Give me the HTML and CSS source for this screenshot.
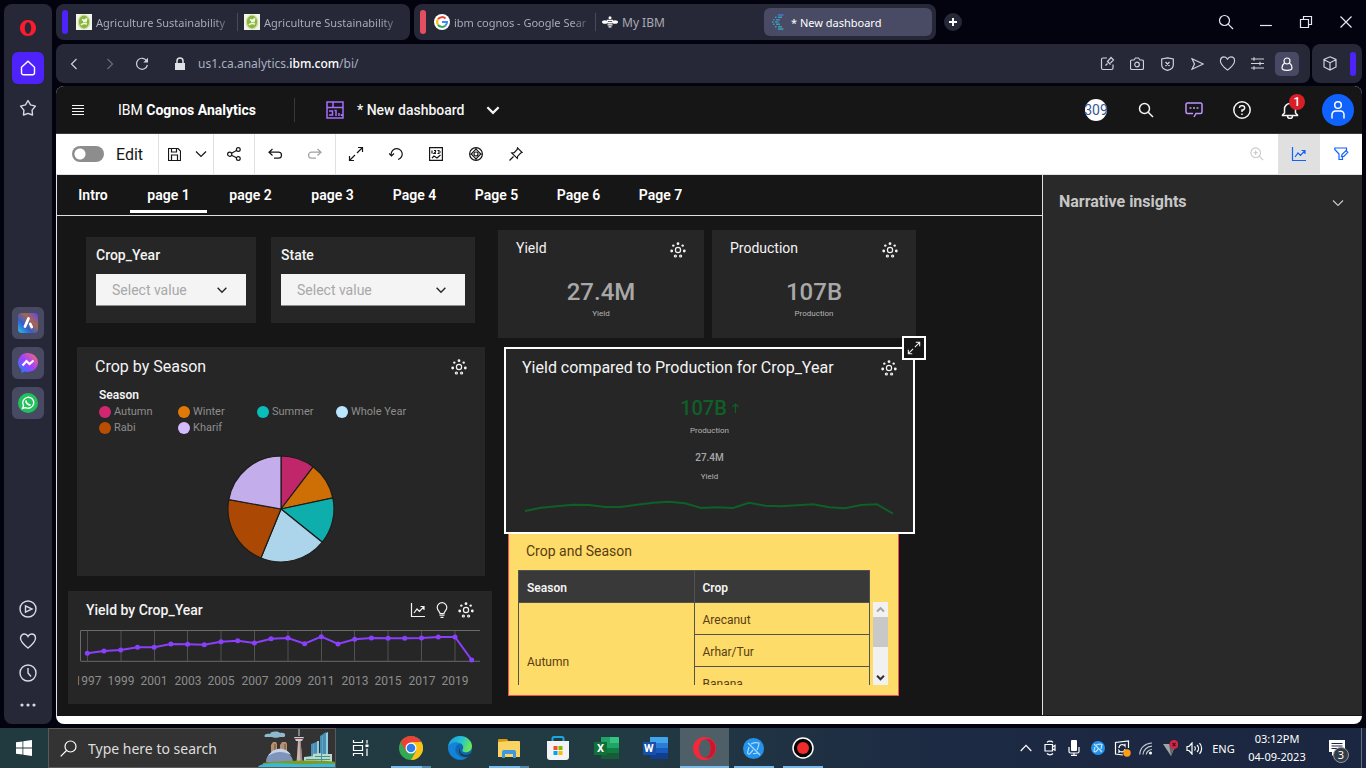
FILE: index.html
```html
<!DOCTYPE html>
<html lang="en">
<head>
<meta charset="utf-8">
<title>* New dashboard</title>
<link rel="stylesheet" href="styles.css">
</head>
<body>
<svg class="sprite" aria-hidden="true">
  <symbol id="chev-down" viewBox="0 0 16 16"><path d="M3 5.500l5 5 5-5"/></symbol>
  <symbol id="dots-gear" viewBox="0 0 16 16"><circle cx="8" cy="8" r="2.600"/><g fill="currentColor" stroke="none"><circle cx="8" cy="1.700" r="1.400"/><circle cx="3.300" cy="3.600" r="1.200"/><circle cx="12.700" cy="3.600" r="1.200"/><circle cx="1.700" cy="9" r="1.400"/><circle cx="14.300" cy="9" r="1.400"/></g><circle cx="5.400" cy="14" r="1"/><circle cx="10.600" cy="14" r="1"/></symbol>
  <symbol id="expand" viewBox="0 0 16 16"><path d="M10 1.500h4.500V6M14.500 1.500L9 7M6 14.500H1.500V10M1.500 14.500L7 9"/></symbol>
  <symbol id="magnify" viewBox="0 0 16 16"><circle cx="6.500" cy="6.500" r="5"/><path d="M10.200 10.200L15 15"/></symbol>
  <symbol id="trend" viewBox="0 0 16 16"><path d="M1.500 1v13.500H15M4 11l3-4 2.500 2.500 4.500-5M10.500 4.500H14V8"/></symbol>
  <symbol id="heart" viewBox="0 0 18 18"><path d="M9 16C4.500 12.500 1.500 9.800 1.500 6.300 1.500 3.700 3.300 2 5.400 2 7 2 8.200 2.900 9 4.400 9.800 2.900 11 2 12.600 2c2.100 0 3.900 1.700 3.900 4.300C16.500 9.800 13.500 12.500 9 16z"/></symbol>
  <symbol id="leaf" viewBox="0 0 16 16"><path fill="#f4f4ea" stroke="none" d="M0 0h16v16H0z"/><ellipse cx="8" cy="8" rx="5.800" ry="7" fill="#8bb646" stroke="#d3e3a7"/><path d="M6 5.500l2 1 2.500-1.500-.5 2.500H7M5 11c2-2.500 4.500-1.500 6-1" stroke="#f4f9df" stroke-width="1.500"/></symbol>
</svg>

<div class="desktop">
  <div class="browser">
    <nav class="sidebar" aria-label="Browser sidebar">
      <button class="side-btn" aria-label="Opera menu"><svg width="16" height="18" viewBox="0 0 16 18"><path fill="#ff1b2d" fill-rule="evenodd" stroke="none" d="M8 1c4.500 0 8 3.500 8 8s-3.500 8-8 8-8-3.500-8-8 3.500-8 8-8zm0 2.200C6 3.200 4.800 6 4.800 9S6 14.800 8 14.800 11.200 12 11.200 9 10 3.200 8 3.200z"/></svg></button>
      <button class="side-btn home" aria-label="Home"><svg width="16" height="16" viewBox="0 0 16 16"><path d="M1.500 7.200L8 1.200l6.500 6v5.600a2 2 0 0 1-2 2h-9a2 2 0 0 1-2-2z"/></svg></button>
      <button class="side-btn" aria-label="Bookmarks"><svg width="18" height="18" viewBox="0 0 18 18"><path stroke-linejoin="round" d="M9 1.500l2.500 4.400 4.900 1.200-3.300 4 .4 4.900L9 14.400 4.500 16l.4-4.900-3.300-4 4.900-1.200z"/></svg></button>
      <div class="side-space"></div>
      <button class="side-btn app" aria-label="Aria"><svg width="20" height="20" viewBox="0 0 20 20"><defs><linearGradient id="ga" x1="0" y1="1" x2="1" y2="0"><stop offset="0" stop-color="#29c4ec"/><stop offset=".35" stop-color="#315fce"/><stop offset=".65" stop-color="#a6654e"/><stop offset="1" stop-color="#5e41ff"/></linearGradient></defs><rect width="20" height="20" rx="4" fill="url(#ga)" stroke="none"/><path d="M10.500 5.500L7 13.500M12.300 11l1.400 3" stroke="#fff" stroke-width="2.800" stroke-linecap="round"/></svg></button>
      <button class="side-btn app" aria-label="Messenger"><svg width="20" height="20" viewBox="0 0 20 20"><defs><linearGradient id="gm" x1="0" y1="1" x2="1" y2="0"><stop offset="0" stop-color="#0a85ff"/><stop offset=".5" stop-color="#a23fff"/><stop offset="1" stop-color="#ff7061"/></linearGradient></defs><path fill="url(#gm)" stroke="none" d="M10 0a10 9.500 0 0 1 0 19l-3-.5L3.500 20l-.3-3.500A9.500 9.500 0 0 1 10 0z"/><path d="M4.500 12.500l4-4.500 3 3 4-3.500" stroke="#fff" stroke-width="2.200"/></svg></button>
      <button class="side-btn app" aria-label="WhatsApp"><svg width="20" height="20" viewBox="0 0 20 20"><circle cx="10" cy="10" r="10" fill="#20c15a" stroke="none"/><path d="M4.500 15.500l1-3a5.500 5.500 0 1 1 2 2z" stroke="#fff"/><path d="M8 7.500c0 2.500 2 4.500 4.500 4.500" stroke="#fff" stroke-width="1.800"/></svg></button>
      <div class="side-space grow"></div>
      <button class="side-btn low" aria-label="Player"><svg width="18" height="18" viewBox="0 0 18 18"><circle cx="9" cy="9" r="8"/><path d="M6.500 5.800v6.400L13 9z"/></svg></button>
      <button class="side-btn low" aria-label="Pinboards"><svg width="18" height="18"><use href="#heart"/></svg></button>
      <button class="side-btn low" aria-label="History"><svg width="18" height="18" viewBox="0 0 18 18"><circle cx="9" cy="9" r="8"/><path d="M9 4v5l3 3.500"/></svg></button>
      <button class="side-btn low" aria-label="More"><svg width="16" height="4" viewBox="0 0 16 4"><g fill="#d8d9e2" stroke="none"><circle cx="2" cy="2" r="1.600"/><circle cx="8" cy="2" r="1.600"/><circle cx="14" cy="2" r="1.600"/></g></svg></button>
    </nav>

    <div class="main">
      <div class="tabstrip">
        <div class="tab-group first">
          <span class="bar violet"></span>
          <button class="btab"><svg width="16" height="16"><use href="#leaf"/></svg><span class="fade">Agriculture Sustainability</span></button>
          <button class="btab lined"><svg width="16" height="16"><use href="#leaf"/></svg><span class="fade">Agriculture Sustainability</span></button>
        </div>
        <div class="tab-group second">
          <span class="bar red"></span>
          <button class="btab"><svg width="16" height="16" viewBox="0 0 16 16"><circle cx="8" cy="8" r="8" fill="#fff" stroke="none"/><g stroke-width="2"><path stroke="#ea4335" d="M4 5.200A5 5 0 0 1 11.500 4.500"/><path stroke="#fbbc05" d="M4 5.200a5 5 0 0 0 0 5.600"/><path stroke="#34a853" d="M4 10.800a5 5 0 0 0 7.300.9"/><path stroke="#4285f4" d="M8 8h5a5 5 0 0 1-1.700 3.700"/></g></svg><span class="fade">ibm cognos - Google Sear</span></button>
          <button class="btab lined plain"><svg width="16" height="12" viewBox="0 0 16 12"><g fill="#fff" stroke="none"><ellipse cx="3" cy="6" rx="3" ry="1.800"/><ellipse cx="13" cy="6" rx="3" ry="1.800"/><circle cx="8" cy="1.800" r="1.500"/><path d="M5 3.800h6v1.400H5zM5.500 6h5v1.400h-5zM5.500 8.200h5v1.300h-5zM6.500 10.300h3v1.200h-3z"/></g></svg><span>My IBM</span></button>
          <button class="btab active"><svg width="14" height="16" viewBox="0 0 14 16"><g stroke="#399bb9" stroke-width="1.600"><path d="M6 1h5.500" stroke="#4778c4"/><path d="M3 3.300h1.500M6 3.300h4"/><path d="M1 5.700h1.500M4 5.700h4" stroke="#3c8ec2"/><path d="M0 8h1.500M3 8h3.500"/><path d="M1 10.300h1.500M4 10.300h4"/><path d="M3 12.700h1.500M6 12.700h4"/><path d="M6 15h5.500"/></g></svg><span>* New dashboard</span></button>
        </div>
        <button class="new-tab" aria-label="New tab"><svg width="10" height="10" viewBox="0 0 10 10"><path d="M5 1v8M1 5h8" stroke-width="2"/></svg></button>
        <div class="win-controls">
          <button aria-label="Search tabs"><svg width="16" height="16"><use href="#magnify"/></svg></button>
          <button aria-label="Minimize"><svg width="12" height="12" viewBox="0 0 12 12"><path d="M0 9.500h12"/></svg></button>
          <button aria-label="Restore"><svg width="14" height="14" viewBox="0 0 14 14"><path d="M1.500 4.500h8v8h-8zM4.500 4V1.500h8v8H10"/></svg></button>
          <button aria-label="Close"><svg width="12" height="12" viewBox="0 0 12 12"><path d="M.5.500l11 11M11.500.500l-11 11"/></svg></button>
        </div>
      </div>

      <div class="navrow">
        <div class="navbar">
          <button class="n36" aria-label="Back"><svg width="8" height="12" viewBox="0 0 8 12"><path d="M6.500 1L1.500 6l5 5"/></svg></button>
          <button class="n36 dim" aria-label="Forward"><svg width="8" height="12" viewBox="0 0 8 12"><path d="M1.500 1l5 5-5 5"/></svg></button>
          <button class="n28" aria-label="Reload"><svg width="14" height="14" viewBox="0 0 14 14"><path d="M11.800 4A5.500 5.500 0 1 0 12.400 8"/><path d="M13 .8v4.700H8.300z" fill="currentColor" stroke="none"/></svg></button>
          <span class="lock"><svg width="10" height="14" viewBox="0 0 10 14"><path fill="#dfe1e6" stroke="none" d="M0 6h10v7H0z"/><path d="M2 6V4a3 3 0 0 1 6 0v2" stroke="#dfe1e6" stroke-width="1.500"/></svg></span>
          <div class="address" role="textbox" contenteditable="true" spellcheck="false" aria-label="Address">us1.ca.analytics.<b>ibm.com</b>/bi/</div>
          <button class="n30" aria-label="Edit page"><svg width="15" height="15" viewBox="0 0 15 15"><path d="M7 2H3a1.500 1.500 0 0 0-1.500 1.500v8.500A1.500 1.500 0 0 0 3 13.500h8.500A1.500 1.500 0 0 0 13 12V8.500M5.500 9.500l2-2M7 5l3.500 3.500M8 5l3-3.500 2.500 2.500-3 3"/></svg></button>
          <button class="n30" aria-label="Snapshot"><svg width="14" height="13" viewBox="0 0 14 13"><path d="M2 3h2l1.500-2h3L10 3h2a1.500 1.500 0 0 1 1.500 1.500V11A1.500 1.500 0 0 1 12 12.500H2A1.500 1.500 0 0 1 .5 11V4.500A1.500 1.500 0 0 1 2 3z"/><circle cx="7" cy="7.500" r="2.300"/></svg></button>
          <button class="n30" aria-label="Ad blocker"><svg width="13" height="14" viewBox="0 0 13 14"><path d="M6.500.800L12.300 2v6c0 3-2.500 4.500-5.800 5.300C3.200 12.500.7 11 .7 8V2zM4.500 5l4 4M8.500 5l-4 4"/></svg></button>
          <button class="n30" aria-label="Send"><svg width="13" height="12" viewBox="0 0 13 12"><path d="M1 .8L12.300 6 1 11.200 3.500 6z"/></svg></button>
          <button class="n30" aria-label="Save to favourites"><svg width="17" height="17"><use href="#heart"/></svg></button>
          <button class="n30" aria-label="Easy setup"><svg width="13" height="13" viewBox="0 0 13 13"><path d="M0 2h13M0 6.500h13M0 11h13M3 .3v3.400M9 4.800v3.400M3 9.300v3.400"/></svg></button>
          <button class="n30 profile" aria-label="Profile"><svg width="12" height="14" viewBox="0 0 12 14"><circle cx="6" cy="4" r="3"/><path d="M3.500 6C1.500 7.500 1 9 1 11c0 2 1.500 2.300 5 2.300s5-.3 5-2.300c0-2-.5-3.500-2.500-5"/></svg></button>
        </div>
        <div class="extbar">
          <button aria-label="Extensions"><svg width="14" height="15" viewBox="0 0 14 15"><path d="M7 .8l6 2.700v7.500l-6 3-6-3V3.500zM1 3.700l6 3 6-3M7 6.700V14"/></svg></button>
          <span class="bar violet"></span>
        </div>
      </div>

      <div class="page">
        <header class="app-head">
          <button class="burger" aria-label="Open menu"><svg width="12" height="12" viewBox="0 0 12 12" shape-rendering="crispEdges"><path d="M0 1.500h12M0 4.500h12M0 7.500h12M0 10.500h12"/></svg></button>
          <a class="brand" href="#">IBM <b>Cognos Analytics</b></a>
          <span class="head-rule"></span>
          <svg class="dash-ico" width="18" height="18" viewBox="0 0 18 18"><path d="M1 1h16v16H1zM1 6.500h16M7 1v5.500M3 14h3.500v-4H3M10 15V9.500H8.500M13 15v-3M15.500 15v-2"/></svg>
          <button class="doc-title">* New dashboard<svg width="18" height="18"><use href="#chev-down"/></svg></button>
          <div class="head-right">
            <button aria-label="Learning"><span class="disc">309</span></button>
            <button aria-label="Search"><svg width="16" height="16"><use href="#magnify"/></svg></button>
            <button class="lilac" aria-label="Assistant"><svg width="18" height="16" viewBox="0 0 18 16"><path d="M9 15l2-3.500h4.500a1.500 1.500 0 0 0 1.500-1.500V2.500A1.500 1.500 0 0 0 15.500 1h-13A1.500 1.500 0 0 0 1 2.500V10a1.500 1.500 0 0 0 1.500 1.500H8M4.500 6h2M8 6h2M11.500 6h2"/></svg></button>
            <button aria-label="Help"><svg width="18" height="18" viewBox="0 0 18 18"><circle cx="9" cy="9" r="8.200"/><path d="M6.500 7V6.500A2 2 0 0 1 8.500 4.700h1a2 2 0 0 1 0 4.300H9v2M9 12.500v1.500"/></svg></button>
            <button class="bell" aria-label="Notifications"><svg width="18" height="18" viewBox="0 0 18 18"><path d="M3.500 12V8a5.500 5.500 0 0 1 11 0v4l2 2v.500h-15V14zM6.500 15a2.500 2.500 0 0 0 5 0"/></svg><span class="badge">1</span></button>
            <button aria-label="Account"><span class="avatar"><svg width="14" height="18" viewBox="0 0 14 18"><circle cx="7" cy="4" r="3.300"/><path d="M1 17.500v-4A3.500 3.500 0 0 1 4.500 10h5A3.500 3.500 0 0 1 13 13.500v4"/></svg></span></button>
          </div>
        </header>

        <div class="tools">
          <label class="edit"><input type="checkbox" role="switch">Edit</label>
          <div class="tool-set save">
            <button aria-label="Save"><svg width="13" height="13" viewBox="0 0 13 13"><path d="M.5.500h9.500l2.500 2.500v9.500H.5zM3.500 1v3h5V1M3.500 12V7h6v5"/></svg></button>
            <button aria-label="Save options"><svg width="16" height="16"><use href="#chev-down"/></svg></button>
          </div>
          <div class="tool-set one"><button aria-label="Share"><svg width="14" height="14" viewBox="0 0 14 14"><circle cx="11.300" cy="2.500" r="1.900"/><circle cx="11.300" cy="11.500" r="1.900"/><circle cx="2.700" cy="7.200" r="2.100"/><path d="M4.500 6.200l5-2.800M4.500 8.200l5 2.500"/></svg></button></div>
          <div class="tool-set"><button aria-label="Undo"><svg width="14" height="12" viewBox="0 0 14 12"><path d="M4.500 1L1 4.200l3.500 3.300M1 4.200h9.500a2.700 2.700 0 0 1 0 6H6"/></svg></button><button class="dim" aria-label="Redo"><svg width="14" height="12" viewBox="0 0 14 12"><path d="M9.500 1L13 4.200 9.500 7.500M13 4.200H3.500a2.700 2.700 0 0 0 0 6H8"/></svg></button></div>
          <div class="tool-set last">
            <button aria-label="Full screen"><svg width="16" height="16"><use href="#expand"/></svg></button>
            <button aria-label="Reset"><svg width="14" height="14" viewBox="0 0 14 14"><path d="M2.500 9A5.500 5.500 0 1 1 9 12.500M0 6.500L2.500 9 5 6.500"/></svg></button>
            <button aria-label="Fields"><svg width="14" height="14" viewBox="0 0 14 14"><path d="M.6.600h12.800v12.800H.6zM3 3.500v3M5 3.500h1.500v1.500L5 6.500h2M8.500 3.500H10v3H8.500M11 5h1M3 11l2-2 3 2 3.500-3"/></svg></button>
            <button aria-label="Explore"><svg width="14" height="14" viewBox="0 0 14 14"><circle cx="7" cy="7" r="6.400"/><path d="M7 2.200L11.800 7 7 11.800 2.200 7zM7 .6v1.600M7 11.800v1.600M.6 7h1.600M11.800 7h1.600"/><circle cx="7" cy="7" r="2"/></svg></button>
            <button aria-label="Pin"><svg width="14" height="14" viewBox="0 0 14 14"><path d="M.5 13.500l4-4M8.500.800l4.700 4.700-1.500.5-3 3.200-.4 2.200L2.700 6l2.500-.3 3-3.200z"/></svg></button>
          </div>
          <div class="tool-end">
            <button class="pale" aria-label="Zoom in"><svg width="14" height="14" viewBox="0 0 16 16"><circle cx="6.500" cy="6.500" r="5.500"/><path d="M10.500 10.500L15 15M4 6.500h5M6.500 4v5"/></svg></button>
            <button class="on" aria-label="Insights"><svg width="16" height="16"><use href="#trend"/></svg></button>
            <button class="blue" aria-label="Filters"><svg width="15" height="14" viewBox="0 0 15 14"><path d="M12.500 3.500V1H.8v1.500L5 7v5.500h3.500V10M7.500 9.500l.5-2 4-4 1.800 1.800-4 4z"/></svg></button>
          </div>
        </div>

        <div class="workspace">
          <main class="board">
            <nav class="pages" role="tablist">
              <button role="tab" class="intro">Intro</button><button role="tab" class="current" aria-selected="true">page 1</button><button role="tab">page 2</button><button role="tab">page 3</button><button role="tab">Page 4</button><button role="tab">Page 5</button><button role="tab">Page 6</button><button role="tab">Page 7</button>
            </nav>
            <div class="canvas">
              <div class="col left">
                <div class="filters">
                  <section class="card filter"><label for="f-year">Crop_Year</label><div class="pick"><select id="f-year"><option>Select value</option></select><svg width="14" height="14"><use href="#chev-down"/></svg></div></section>
                  <section class="card filter"><label for="f-state">State</label><div class="pick"><select id="f-state"><option>Select value</option></select><svg width="14" height="14"><use href="#chev-down"/></svg></div></section>
                </div>
                <section class="card season">
                  <div class="card-head"><h2>Crop by Season</h2><button aria-label="Insights"><svg width="16" height="16"><use href="#dots-gear"/></svg></button></div>
                  <h3>Season</h3>
                  <ul class="legend"><li><i class="c-autumn"></i>Autumn</li><li><i class="c-winter"></i>Winter</li><li><i class="c-summer"></i>Summer</li><li><i class="c-year"></i>Whole Year</li><li><i class="c-rabi"></i>Rabi</li><li><i class="c-kharif"></i>Kharif</li></ul>
                  <svg class="pie" width="110" height="110" viewBox="0 0 110 110" role="img" aria-label="Crop by season"><g stroke="#1c1c1c"><path fill="#c0266a" d="M55 55V2A53 53 0 0 1 87.100 12.800z"/><path fill="#cd6f04" d="M55 55L87.100 12.800A53 53 0 0 1 106.800 43.900z"/><path fill="#0daeab" d="M55 55L106.800 43.900A53 53 0 0 1 96.300 88.200z"/><path fill="#acd4ea" d="M55 55L96.300 88.200A53 53 0 0 1 34.900 104z"/><path fill="#ab4804" d="M55 55L34.900 104A53 53 0 0 1 2.800 45.600z"/><path fill="#c3adea" d="M55 55L2.800 45.600A53 53 0 0 1 55 2z"/></g></svg>
                </section>
                <section class="card trend">
                  <div class="card-head"><h2>Yield by Crop_Year</h2><div class="acts"><button aria-label="Forecast"><svg width="16" height="16"><use href="#trend"/></svg></button><button aria-label="Insights"><svg width="12" height="16" viewBox="0 0 12 16"><path d="M4 11.500C4 9.500 1.200 8.500 1.200 5.500a4.800 4.800 0 0 1 9.600 0c0 3-2.800 4-2.800 6zM3.500 13.200h5M4.500 15.300h3"/></svg></button><button aria-label="Settings"><svg width="16" height="16"><use href="#dots-gear"/></svg></button></div></div>
                  <svg class="line" viewBox="-2 0 402 60" role="img" aria-label="Yield by crop year">
                    <path stroke="#6a6a6a" d="M.5 31V.5H400M.5 31.300H400"/>
                    <path stroke="#515151" d="M7.500 1v30M41 1v30M74.500 1v30M107.500 1v30M141 1v30M174.500 1v30M208 1v30M241.500 1v30M274.500 1v30M308 1v30M341.500 1v30M375 1v30"/>
                    <g class="series"><polyline points="7.300,23.300 24,21 40.700,20 57.500,17.300 74.200,17.300 90.900,14 107.600,14.300 124.300,14.700 141,11.700 157.700,10.700 174.400,13 191.100,8.700 207.900,8 224.600,13.700 241.300,6.700 258,14 274.700,9.300 291.400,8 308.100,8.300 324.800,8.300 341.500,8 358.300,7 375,7 391.700,30"/>
                    <path class="dots" d="M7.300 23.300h0M24 21h0M40.700 20h0M57.500 17.300h0M74.200 17.300h0M90.900 14h0M107.600 14.300h0M124.300 14.700h0M141 11.700h0M157.700 10.700h0M174.400 13h0M191.100 8.700h0M207.900 8h0M224.600 13.700h0M241.300 6.700h0M258 14h0M274.700 9.300h0M291.400 8h0M308.100 8.300h0M324.800 8.300h0M341.500 8h0M358.300 7h0M375 7h0M391.700 30h0"/></g>
                    <g class="ticks"><text x="8" y="55">1997</text><text x="41" y="55">1999</text><text x="74" y="55">2001</text><text x="108" y="55">2003</text><text x="141" y="55">2005</text><text x="175" y="55">2007</text><text x="208" y="55">2009</text><text x="241" y="55">2011</text><text x="275" y="55">2013</text><text x="308" y="55">2015</text><text x="342" y="55">2017</text><text x="375" y="55">2019</text></g>
                  </svg>
                </section>
              </div>

              <div class="col right">
                <div class="metrics">
                  <section class="card metric"><div class="card-head"><h2>Yield</h2><button aria-label="Insights"><svg width="16" height="16"><use href="#dots-gear"/></svg></button></div><strong>27.4M</strong><small>Yield</small></section>
                  <section class="card metric"><div class="card-head"><h2>Production</h2><button aria-label="Insights"><svg width="16" height="16"><use href="#dots-gear"/></svg></button></div><strong>107B</strong><small>Production</small></section>
                </div>
                <section class="card compare">
                  <button class="grow-btn" aria-label="Expand"><svg width="14" height="14"><use href="#expand"/></svg></button>
                  <div class="card-head"><h2>Yield compared to Production for Crop_Year</h2><button aria-label="Insights"><svg width="16" height="16"><use href="#dots-gear"/></svg></button></div>
                  <strong>107B <svg width="7" height="10" viewBox="0 0 7 10"><path d="M3.500 10V1M.5 4l3-3 3 3"/></svg></strong>
                  <small>Production</small>
                  <em>27.4M</em>
                  <small>Yield</small>
                  <svg class="spark" viewBox="0 0 368 16"><polyline points="0,11 16,7.700 32,6.300 48,4.700 64,5 80,7 96,7 112,4.700 128,2.700 144,1.700 160,3.300 176,8 192,7.300 208,8 224,2.700 240,5.700 256,6.300 272,5.300 288,4.300 304,7.300 320,8.300 336,5 352,4.300 368,13.700"/></svg>
                </section>
                <section class="crops">
                  <h2>Crop and Season</h2>
                  <div class="grid-wrap">
                    <div class="grid-clip">
                      <table>
                        <thead><tr><th scope="col">Season</th><th scope="col">Crop</th></tr></thead>
                        <tbody><tr><td rowspan="3" class="span">Autumn</td><td>Arecanut</td></tr><tr><td>Arhar/Tur</td></tr><tr><td>Banana</td></tr></tbody>
                      </table>
                    </div>
                    <div class="scroller"><button class="dim" aria-label="Scroll up"><svg width="11" height="11" viewBox="0 0 16 16"><path d="M3 11l5-5 5 5"/></svg></button><span class="thumb"></span><button aria-label="Scroll down"><svg width="11" height="11"><use href="#chev-down"/></svg></button></div>
                  </div>
                </section>
              </div>
            </div>
          </main>
          <aside class="insights"><h2>Narrative insights</h2><button aria-label="Collapse"><svg width="16" height="16"><use href="#chev-down"/></svg></button></aside>
        </div>
      </div>
    </div>
  </div>

  <footer class="taskbar">
    <button class="start" aria-label="Start"><svg width="16" height="16" viewBox="0 0 16 16"><path fill="#fff" stroke="none" d="M0 2.300l6.500-.9v6.200H0zM7.300 1.200L16 0v7.600H7.300zM0 8.400h6.500v6.200L0 13.700zM7.300 8.400H16V16l-8.700-1.200z"/></svg></button>
    <label class="search"><svg class="glass" width="17" height="17" viewBox="0 0 17 17"><circle cx="10.500" cy="6.500" r="5.500"/><path d="M6.500 10.500L.7 16.300"/></svg><input type="search" placeholder="Type here to search" aria-label="Type here to search">
      <svg class="city" width="77" height="38" viewBox="0 0 77 38"><g stroke="none"><path fill="#8fb9ce" d="M7 8c-2-2 2-4 5-3 1-3 8-3 10-1 4-1 6 1 5 3 1 1-3 1-5 1-2 1-7 1-8 0z"/><path fill="#b59170" d="M13 16l2-3h3l1 2v13h-6zM22 16l2-3h4l1 2v13h-7z"/><path fill="#8f6e54" d="M16 15h2v13h-2zM26 15h2v13h-2z"/><path fill="#4a8eb1" d="M53 15l8-3v22h-8zM62 7l6-4 1 30h-7z"/><path fill="#8fcfe4" d="M59 12h2v21h-2zM68 4l2-1v30h-2z"/><path fill="#5aa5c3" d="M55 15h1v19h-1zM64 7h1v26h-1z"/><path fill="#7e94bd" d="M8 33c0-15 26-15 27 0z"/><path fill="#c5d3e3" d="M10 27c5-9 18-10 23-1-8-4-15-4-23 1z"/><path fill="#cdb4aa" d="M40 12h2.500l2 22h-6z"/><path fill="#9d8685" d="M41.500 12h1l2 22h-2z"/><path fill="#c8ced6" d="M40.500 0h1v7h-1zM36 8h10l-2 4h-6z"/><path fill="#9b344a" d="M37 9h8v1h-8z"/><path fill="#b9dcc8" d="M46 28l9-1v7h-9zM55 25l8-1v10h-8zM64 25h10v9H64z"/><path fill="#4f8f8d" d="M48 30h24v1H48zM57 27h15v1H57z"/><path fill="#779c2b" d="M5 34c20-3 60-3 72-1v5H5z"/><path fill="#3ab9d6" d="M0 38c2-5 24-4 38-3 10 1 25-1 39 0v3z"/></g></svg>
    </label>
    <button class="view" aria-label="Task view"><svg width="17" height="16" viewBox="0 0 17 16"><path d="M1.500 0v2.500h9V0M1.500 5.500h9v5h-9zM1.500 16v-2.500h9V16M15 0v3.500M15 8.500V16"/><path stroke-width="3" d="M15 4.500v2.500"/></svg></button>
    <button class="tapp run" aria-label="Chrome"><svg width="24" height="24" viewBox="0 0 24 24"><g stroke="none"><circle cx="12" cy="12" r="12" fill="#34a853"/><path fill="#ea4335" d="M1.600 6A12 12 0 0 1 22.400 6H12l-5.200 9z"/><path fill="#fbc116" d="M22.400 6A12 12 0 0 1 12 24l5.200-9L12 6z"/><circle cx="12" cy="12" r="5.500" fill="#fff"/><circle cx="12" cy="12" r="4.300" fill="#2f7de9"/></g></svg></button>
    <button class="tapp" aria-label="Edge"><svg width="24" height="24" viewBox="0 0 24 24"><defs><linearGradient id="ge" x2="1" y2=".3"><stop stop-color="#1899de"/><stop offset=".6" stop-color="#28c3cf"/><stop offset="1" stop-color="#66e65a"/></linearGradient></defs><g stroke="none"><circle cx="12" cy="12" r="12" fill="#0c69b8"/><path fill="url(#ge)" d="M0 11C1 4 6 0 12 0c7 0 12 5 12 10 0 5-4 7-8 6-2-.5-2-2-1-3 1-3-1-6-5-6-4-1-8 1-10 4z"/><path fill="#1682d5" d="M0 11c3-5 9-6 12-3-5 0-7 8-1 12 2 2 5 2 8 1-3 3-7 3-10 2-6-2-9-7-9-12z"/><path fill="#213a40" d="M12 11c-1 4 1 8 6 8 2 0 3-1 5-2-1 2-2 3-4 4-6 0-10-4-7-10z"/></g></svg></button>
    <button class="tapp run" aria-label="File Explorer"><svg width="22" height="19" viewBox="0 0 22 19"><g stroke="none"><path fill="#d9980c" d="M0 1a1 1 0 0 1 1-1h8l2 3H0z"/><path fill="#f9d463" d="M0 3l11-1h10a1 1 0 0 1 1 1v15H0z"/><path fill="#3e98dd" d="M4 19v-6a2 2 0 0 1 2-2h10a2 2 0 0 1 2 2v6h-3v-4H7v4z"/></g></svg></button>
    <button class="tapp" aria-label="Store"><svg width="24" height="24" viewBox="0 0 24 24"><path d="M6.500 7V2.500A1.500 1.500 0 0 1 8 1h8a1.500 1.500 0 0 1 1.500 1.500V7" stroke="#1aa7e2" stroke-width="2"/><g stroke="none"><path fill="#f1f3f5" d="M1 5h22v16a3 3 0 0 1-3 3H4a3 3 0 0 1-3-3z"/><path fill="#f25022" d="M7.500 10h4v4h-4z"/><path fill="#7fba00" d="M12.500 10h4v4h-4z"/><path fill="#00a4ef" d="M7.500 15h4v4h-4z"/><path fill="#ffb900" d="M12.500 15h4v4h-4z"/></g></svg></button>
    <button class="tapp office" aria-label="Excel"><svg width="25" height="22" viewBox="0 0 25 22"><g stroke="none"><path fill="#21a366" d="M7 0h17a1 1 0 0 1 1 1v10H7z"/><path fill="#33c481" d="M16 0h8a1 1 0 0 1 1 1v5h-9z"/><path fill="#107c41" d="M7 11h18v10a1 1 0 0 1-1 1H7z"/><path fill="#185c37" d="M7 16h18v5a1 1 0 0 1-1 1H7z"/><path fill="#0f7038" d="M0 5h13v13H0z"/></g><text x="3" y="15">X</text></svg></button>
    <button class="tapp office" aria-label="Word"><svg width="25" height="22" viewBox="0 0 25 22"><g stroke="none"><path fill="#41a5ee" d="M7 0h17a1 1 0 0 1 1 1v5H7z"/><path fill="#2b7cd3" d="M7 6h18v5H7z"/><path fill="#185abd" d="M7 11h18v5H7z"/><path fill="#103f91" d="M7 16h18v5a1 1 0 0 1-1 1H7z"/><path fill="#1550ad" d="M0 5h13v13H0z"/></g><text x="1" y="15">W</text></svg></button>
    <button class="tapp here" aria-label="Opera"><svg width="23" height="23" viewBox="0 0 23 23"><path fill="#f5283a" fill-rule="evenodd" stroke="none" d="M11.500 0A11.500 11.500 0 1 1 11.500 23 11.500 11.500 0 0 1 11.500 0zM12 2.200c-3.500 0-6 4.500-6 9.300s2.500 9.300 6 9.300 5.500-4.500 5.500-9.300S15.500 2.200 12 2.200z"/><path fill="#c9182e" stroke="none" d="M12 2.200C16 0 22.500 4.500 22.500 11.500S16 23 12 20.800c3.500 0 5.500-4.500 5.500-9.300S15.500 2.200 12 2.200z"/></svg></button>
    <button class="tapp open" aria-label="Screen share"><svg width="21" height="21" viewBox="0 0 21 21"><circle cx="10.500" cy="10.500" r="10.500" fill="#2492ea" stroke="none"/><path stroke="#a5dcff" d="M5 5l12 12M8 6C11 4.500 14 4.500 16 5c0 3-1 5-2 7M6 9l-1.500 5.500c0 1.500 2 2 2.500 1l3-3.500M10 15.500c2 .5 4-.5 5-.5"/></svg></button>
    <button class="tapp open" aria-label="Recorder"><svg width="22" height="22" viewBox="0 0 22 22"><circle cx="11" cy="11" r="10" fill="#050505" stroke="#fff" stroke-width="1.500"/><circle cx="11" cy="11" r="6" fill="#ef2c2c" stroke="none"/></svg></button>

    <div class="tray">
      <button aria-label="Show hidden icons"><svg width="12" height="8" viewBox="0 0 12 8"><path d="M.7 7L6 1.300 11.300 7"/></svg></button>
      <button aria-label="Meet now"><svg width="12" height="16" viewBox="0 0 12 16"><path d="M1 4.500h7.500v6.500H1zM8.500 7l2.500-1.700v5L8.500 8.800M3 2.300C4.500.7 7.500.7 9 2.300M3 13.500c1.500 1.700 4.500 1.700 6 0"/></svg></button>
      <button aria-label="Microphone"><svg width="12" height="16" viewBox="0 0 12 16"><rect x="3" y="0" width="6" height="11" rx="1" fill="#fff" stroke="none"/><path d="M1 7v4.500a1.500 1.500 0 0 0 1.500 1.500h7a1.500 1.500 0 0 0 1.500-1.500V7M6 13v2M3 15.300h6"/></svg></button>
      <button aria-label="Sharing"><svg width="14" height="14" viewBox="0 0 14 14"><circle cx="7" cy="7" r="7" fill="#2492ea" stroke="none"/><path stroke="#b9e4ff" d="M3 3l8 8M5 4c3-1 5-1 6-.5L10 8M4 6L3 10c1 2 3 0 4-2"/></svg></button>
      <button aria-label="Updates"><svg width="17" height="17" viewBox="0 0 17 17"><path d="M14.500 8V1l-13 1.500V14L9 15M5 8a3.300 3.300 0 0 1 6-2V3.800M11 9a3.300 3.300 0 0 1-6 1.500V13"/><circle cx="13" cy="13" r="3.700" fill="#ff9d16" stroke="none"/></svg></button>
      <button aria-label="Network"><svg width="14" height="13" viewBox="0 0 14 13"><circle cx="11.500" cy="11" r="1.500" fill="#fff" stroke="none"/><g stroke="#bfc8cf"><path d="M.7 12.500C1 6 6 1.300 13 1M4 12.500c.3-4.500 4-8 9-8.300M7.300 12.500c.3-2.500 2.700-5 5.700-5"/></g></svg></button>
      <button aria-label="Security"><svg width="15" height="16" viewBox="0 0 15 16"><path fill="#a0a4a8" stroke="none" d="M0 4h13l-5 12z"/><path fill="#5f6469" stroke="none" d="M6 4h6L8 16z"/><circle cx="11" cy="4.500" r="4.500" fill="#d42549" stroke="none"/><path d="M9.500 3l3 3M12.500 3l-3 3" stroke="#511"/></svg></button>
      <button aria-label="Volume"><svg width="17" height="13" viewBox="0 0 17 13"><path d="M1 4.500h2l3-3.500v11l-3-3.500H1zM8.500 4.500c1 1 1 3 0 4M11 3c2 2 2 5 0 7M13.500 1.200c2.800 3 2.800 7.600 0 10.600"/></svg></button>
      <button class="lang">ENG</button>
      <button class="clock"><span>03:12PM</span><span>04-09-2023</span></button>
      <button class="note" aria-label="Action center"><svg width="17" height="16" viewBox="0 0 17 16"><path fill="#fff" stroke="none" d="M0 0h16v12h-9l-4 4v-4H0z"/><path d="M2.500 3.500h11M2.500 6h11M2.500 8.500h8" stroke="#1c2742"/></svg><span class="count">3</span></button>
      <span class="peek"></span>
    </div>
  </footer>
</div>
</body>
</html>
```
FILE: styles.css
```css
* { box-sizing: border-box; }
body, h2, h3, ul { margin: 0; padding: 0; }
body {
  background: #02030f;
  color: #f4f4f4;
  font-family: Roboto, "Liberation Sans", sans-serif;
  font-size: 14px;
}
button, input, select { font: inherit; color: inherit; }
button {
  display: flex;
  align-items: center;
  justify-content: center;
  padding: 0;
  border: 0;
  background: none;
}
svg { display: block; flex: none; fill: none; stroke: currentColor; stroke-width: 1.2; }
.sprite { position: absolute; width: 0; height: 0; }
.dim { opacity: .4; }

.desktop { display: flex; flex-direction: column; height: 100vh; min-height: 768px; overflow: hidden; }
.browser { display: flex; flex: 1; min-height: 0; gap: 4px; padding: 4px; }
.main { display: flex; flex: 1; flex-direction: column; min-width: 0; }

/* Sidebar */
.sidebar {
  display: flex;
  flex-direction: column;
  align-items: center;
  gap: 8px;
  width: 48px;
  padding: 8px 0 7px;
  border-radius: 8px;
  background: #262837;
  color: #d8d9e2;
}
.side-btn { width: 32px; height: 32px; border-radius: 6px; }
.side-btn svg { stroke-width: 1.4; }
.home { background: #4d22fb; color: #fff; }
.app { background: #484a63; }
.side-space { height: 167px; }
.side-space.grow { flex: 1; height: auto; }
.side-btn.low { height: 24px; }

/* Browser tabs */
.tabstrip, .navbar, .extbar, .address, .search, .tray { font-family: "Noto Sans", "Open Sans", sans-serif; }
.tabstrip { display: flex; align-items: center; gap: 4px; height: 36px; font-size: 11px; color: #a9aab5; }
.tab-group { display: flex; align-items: center; height: 36px; padding: 4px 4px 4px 6px; border-radius: 8px; background: #262837; }
.first { width: 354px; }
.second { width: 522px; }
.bar { width: 6px; height: 24px; border-radius: 3px; }
.violet { background: #4d22fb; }
.red { background: #e54d61; }
.btab { flex: none; justify-content: flex-start; gap: 4px; width: 168px; height: 28px; padding: 0 0 0 8px; border-radius: 6px; white-space: nowrap; }
.btab span { flex: 1; text-align: left; }
.lined { position: relative; }
.lined::before { content: ""; position: absolute; left: 1px; width: 1px; height: 18px; background: #484a5c; }
.fade { -webkit-mask-image: linear-gradient(90deg, #000 84%, transparent); mask-image: linear-gradient(90deg, #000 84%, transparent); }
.btab.active { margin-left: auto; gap: 5px; background: #494b64; color: #fff; }
.plain { font-size: 12px; }
.new-tab { width: 18px; height: 18px; margin-left: 4px; border-radius: 9px; background: #262837; color: #fff; }
.win-controls { display: flex; margin-left: auto; margin-right: -4px; color: #e8e8ee; }
.win-controls button { width: 40px; height: 32px; }

/* Address row */
.navrow { display: flex; gap: 2px; height: 39px; margin: 4px 0 3px; color: #d0d1db; }
.navbar { display: flex; flex: 1; align-items: center; padding-right: 8px; border-radius: 8px; background: #262837; }
.n36 { width: 36px; height: 32px; }
.n28 { width: 28px; height: 32px; }
.n30 { width: 30px; height: 32px; }
.lock { display: flex; justify-content: center; width: 36px; margin-left: 6px; }
.address { flex: 1; font-size: 12px; color: #a9b0c0; outline: 0; }
.address b { font-weight: 500; color: #fff; }
.profile { width: 24px; height: 24px; margin: 0 3px; border-radius: 5px; background: #484a63; color: #fff; }
.extbar { display: flex; align-items: center; justify-content: space-between; width: 50px; padding: 0 6px 0 11px; border-radius: 8px; background: #262837; }

/* Application header */
.page { display: flex; flex: 1; flex-direction: column; min-height: 0; overflow: hidden; padding-bottom: 8px; border-radius: 8px; background: #fff; }
.app-head { display: flex; align-items: center; height: 48px; border-bottom: 1px solid #393939; background: #161616; }
.burger { width: 44px; height: 44px; }
.burger svg { stroke-width: 1; }
.brand { margin-left: 18px; color: #fff; text-decoration: none; white-space: nowrap; width: 176px; }
.brand b { font-weight: 700; }
.head-rule { width: 1px; height: 24px; background: #393939; }
.dash-ico { margin: 0 13px 0 31px; color: #a56eff; stroke-width: 1.5; }
.doc-title { gap: 20px; height: 40px; font-weight: 500; }
.doc-title svg { stroke-width: 2; }
.head-right { display: flex; margin-left: auto; }
.head-right button { width: 48px; height: 47px; }
.head-right svg { stroke-width: 1.5; }
.lilac { color: #be95ff; }
.disc { display: flex; align-items: center; justify-content: center; width: 22px; height: 22px; margin-right: 4px; border-radius: 11px; background: #fff; color: #345995; }
.bell { position: relative; }
.badge { position: absolute; top: 8px; right: 9px; width: 16px; height: 16px; border-radius: 8px; background: #da1e28; color: #fff; font-size: 12px; font-weight: 500; line-height: 16px; }
.avatar { display: flex; align-items: center; justify-content: center; width: 32px; height: 32px; border-radius: 16px; background: #0f62fe; color: #fff; }

/* Toolbar */
.tools { display: flex; height: 41px; border-bottom: 1px solid #e0e0e0; background: #fff; color: #161616; }
.edit { display: flex; align-items: center; gap: 12px; width: 102px; padding-left: 16px; font-size: 16px; }
.edit input { appearance: none; width: 32px; height: 16px; margin: 0; border-radius: 8px; background: radial-gradient(circle at 8px 8px, #fff 5px, #8d8d8d 6px); }
.tool-set { display: flex; border-left: 1px solid #e0e0e0; }
.tool-set button { width: 40px; height: 40px; }
.tool-set.save { width: 55px; }
.tool-set.save button { width: 30px; }
.tool-set.save button + button { width: 24px; }
.tool-end { display: flex; margin-left: auto; }
.tool-end button { width: 42px; }
.pale { color: #c6c6c6; }
.on { background: #e0e0e0; color: #0f62fe; }
.blue { color: #0f62fe; }

/* Workspace */
.workspace { display: flex; flex: 1; min-height: 0; border-left: 1px solid #e0e0e0; background: #161616; }
.board { display: flex; flex: 1; flex-direction: column; min-width: 0; }
.pages { display: flex; gap: 5px; height: 41px; padding-bottom: 2px; border-bottom: 1px solid #e0e0e0; }
.pages button { width: 77px; padding-top: 4px; border-bottom: 3px solid transparent; color: #fff; font-weight: 600; }
.pages .intro { width: 68px; padding-left: 4px; }
.pages .current { border-color: #fff; }
.canvas { display: grid; flex: 1; grid-template-columns: 424fr 418fr; gap: 6px; padding: 0 126px 0 11px; align-items: start; min-height: 0; }
.card { background: #262626; }
.card-head { display: flex; align-items: center; justify-content: space-between; }
h2 { font-size: 14px; font-weight: 500; line-height: 20px; }
.left { display: flex; flex-direction: column; padding-top: 21px; }
.filters { display: grid; grid-template-columns: 170fr 204fr; gap: 15px; margin: 0 17px 24px 18px; }
.filter { padding: 8px 10px 17px; }
.filter label { display: block; margin-bottom: 8px; line-height: 21px; font-weight: 500; }
.pick { position: relative; }
.pick select { appearance: none; display: block; width: 100%; height: 32px; padding: 0 16px; border: 0; border-bottom: 1px solid #8d8d8d; border-radius: 0; background: #f4f4f4; color: #a8a8a8; }
.pick svg { position: absolute; top: 9px; right: 17px; color: #262626; pointer-events: none; stroke-width: 1.6; }

.season { margin: 0 7px 15px 9px; padding: 10px 18px 12px; }
.season h2 { font-size: 16px; font-weight: 400; }
.season h3 { margin: 11px 0 2px 4px; font-size: 12px; font-weight: 600; line-height: 14px; }
.legend { display: grid; grid-template-columns: repeat(4, 79px); margin-left: 4px; list-style: none; font-size: 11px; line-height: 16px; color: #8d8d8d; }
.legend li { display: flex; align-items: center; gap: 3px; white-space: nowrap; }
.legend i { width: 12px; height: 12px; border-radius: 6px; }
.c-autumn { background: #d12771; }
.c-winter { background: #df7907; }
.c-summer { background: #08bdba; }
.c-year { background: #bae6ff; }
.c-rabi { background: #ba4e00; }
.c-kharif { background: #d4bbff; }
.pie { margin: 18px auto 0; }

.trend { padding: 9px 12px 14px 10px; }
.trend .card-head { height: 20px; padding: 0 6px 0 8px; }
.acts { display: flex; gap: 9px; }
.acts button { min-width: 14px; }
.line { width: 100%; margin-top: 10px; stroke-width: 1; }
.series { stroke: #8a3ffc; stroke-width: 2; }
.dots { stroke-width: 5; stroke-linecap: round; }
.ticks { fill: #8d8d8d; stroke: none; font-size: 12px; text-anchor: middle; }

.right { padding-top: 14px; }
.metrics { display: grid; grid-template-columns: 206fr 204fr; gap: 8px; }
.metric { display: flex; flex-direction: column; height: 108px; padding: 8px 18px; text-align: center; }
.metric h2 { font-weight: 400; }
.metric strong { margin-top: 18px; font-size: 24px; font-weight: 500; line-height: 32px; color: #a8a8a8; }
.metric .card-head button { margin-top: 3px; }
small { font-size: 8px; line-height: 12px; color: #b4b4b4; }
.compare { position: relative; display: flex; flex-direction: column; align-items: center; margin: 9px 1px 0 6px; padding: 9px 16px 16px; border: 2px solid #fff; }
.compare .card-head { align-self: stretch; }
.compare h2 { font-size: 16px; font-weight: 400; }
.compare strong { display: flex; align-items: center; gap: 5px; margin-top: 18px; font-size: 20px; font-weight: 500; line-height: 24px; color: #0e6027; }
.compare small { margin-top: 5px; }
.compare em { margin-top: 13px; font-size: 10px; font-style: normal; font-weight: 500; line-height: 16px; color: #a8a8a8; }
.spark { align-self: stretch; margin: 17px 4px 0 3px; stroke: #0e6027; stroke-width: 2; }
.grow-btn { position: absolute; top: -13px; right: -13px; width: 24px; height: 24px; border: 2px solid #fff; background: #161616; }

.crops { margin: 0 17px 0 10px; padding: 7px 10px 10px 9px; border: 1px solid #fa4d56; border-top: 0; background: #fddc69; color: #5a3b10; }
.crops h2 { margin: 0 0 9px 8px; font-weight: 400; }
.grid-wrap { display: flex; gap: 3px; }
.grid-clip { flex: 1; height: 115px; overflow: hidden; }
table { width: 100%; border-collapse: collapse; table-layout: fixed; font-size: 12px; }
th, td { height: 32px; padding: 2px 8px 0; border: 1px solid #525252; text-align: left; font-weight: 400; }
th { background: #393939; color: #f4f4f4; font-weight: 600; }
.span { padding-top: 52px; vertical-align: top; }
.scroller { display: flex; flex-direction: column; align-items: center; width: 15px; height: 83px; margin-top: 32px; background: #f1f1f1; color: #333; }
.scroller button { width: 15px; height: 15px; }
.scroller svg { stroke-width: 3; }
.thumb { width: 15px; height: 30px; margin-bottom: auto; background: #c8c8c8; }

.insights { display: flex; align-items: flex-start; justify-content: space-between; width: 320px; margin-bottom: 1px; padding: 17px 16px; border-left: 1px solid #e0e0e0; background: #292929; color: #c6c6c6; }
.insights h2 { font-size: 16px; font-weight: 700; }
.insights button { height: 22px; }

/* Taskbar */
.taskbar { display: flex; height: 40px; background: linear-gradient(90deg, #213a40 0, #223b43 45%, #1d2a43 68%, #1b2640 100%); color: #fff; }
.start { width: 48px; }
.search { position: relative; display: flex; align-items: center; width: 288px; padding-left: 11px; border: 1px solid #5a5a5a; background: #333; }
.search input { flex: 1; min-width: 0; padding: 0 11px; border: 0; outline: 0; background: none; font-size: 14px; }
.search input::placeholder { color: #dedede; opacity: 1; }
.city { position: absolute; right: 0; bottom: 0; }
.view { width: 49px; }
.tapp { width: 49px; border-top: 2px solid transparent; border-bottom: 2px solid transparent; }
.view + .tapp { margin-left: 1px; }
.office text { fill: #fff; stroke: none; font-size: 11px; font-weight: 700; }
.here { background: #4e5f67; border-top-color: #4e5f67; border-bottom-color: #76b9ed; }
.open, .run { border: 0; background: linear-gradient(#76b9ed, #76b9ed) center bottom / 40px 2px no-repeat; }
.run { background-image: linear-gradient(90deg, #76b9ed 31px, #5487ad 31px); }
.tray { display: flex; margin-left: auto; font-size: 11px; }
.tray button { width: 24px; }
.tray .lang { width: 35px; }
.tray .clock { flex-direction: column; width: 72px; line-height: 18px; white-space: nowrap; }
.tray .note { position: relative; width: 48px; }
.count { position: absolute; right: 12px; bottom: 5px; width: 16px; height: 16px; border: 1px solid #929aa6; border-radius: 8px; background: #333b43; font-size: 11px; line-height: 14px; }
.peek { width: 5px; border-left: 1px solid #667080; }
```
